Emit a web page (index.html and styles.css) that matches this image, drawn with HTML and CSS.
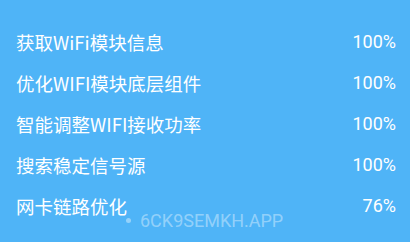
FILE: index.html
```html
<!DOCTYPE html>
<html>
<head>
    <title>WiFi Optimize</title>
    <link rel="stylesheet" href="styles.css">
</head>
<body>
<div class="panel">
    <div class="row"><span class="name">获取WiFi模块信息</span><span class="value">100%</span></div>
    <div class="row"><span class="name">优化WIFI模块底层组件</span><span class="value">100%</span></div>
    <div class="row"><span class="name">智能调整WIFI接收功率</span><span class="value">100%</span></div>
    <div class="row"><span class="name">搜索稳定信号源</span><span class="value">100%</span></div>
    <div class="row"><span class="name">网卡链路优化</span><span class="value">76%</span></div>
    <div class="watermark"><span class="dot"></span>6CK9SEMKH.APP</div>
</div>
</body>
</html>
```

FILE: styles.css
```css
body {
    margin: 0;
    background-color: #4fb4f7;
    font-family: Roboto, "Noto Sans CJK SC", sans-serif;
    color: #fff;
}

.panel {
    position: relative;
    height: 242px;
    padding: 21px 14px 0 16px;
    box-sizing: border-box;
}

.row {
    display: flex;
    justify-content: space-between;
    align-items: center;
    height: 41px;
    font-size: 18px;
}

.name {
    font-family: "Noto Sans CJK SC", sans-serif;
    font-size: 18.5px;
}

.watermark {
    position: absolute;
    left: 126px;
    top: 210px;
    display: flex;
    align-items: center;
    font-size: 18px;
    color: rgba(255, 255, 255, 0.4);
}

.dot {
    width: 5px;
    height: 5px;
    border-radius: 50%;
    background-color: rgba(255, 255, 255, 0.4);
    margin-right: 9px;
}
```
